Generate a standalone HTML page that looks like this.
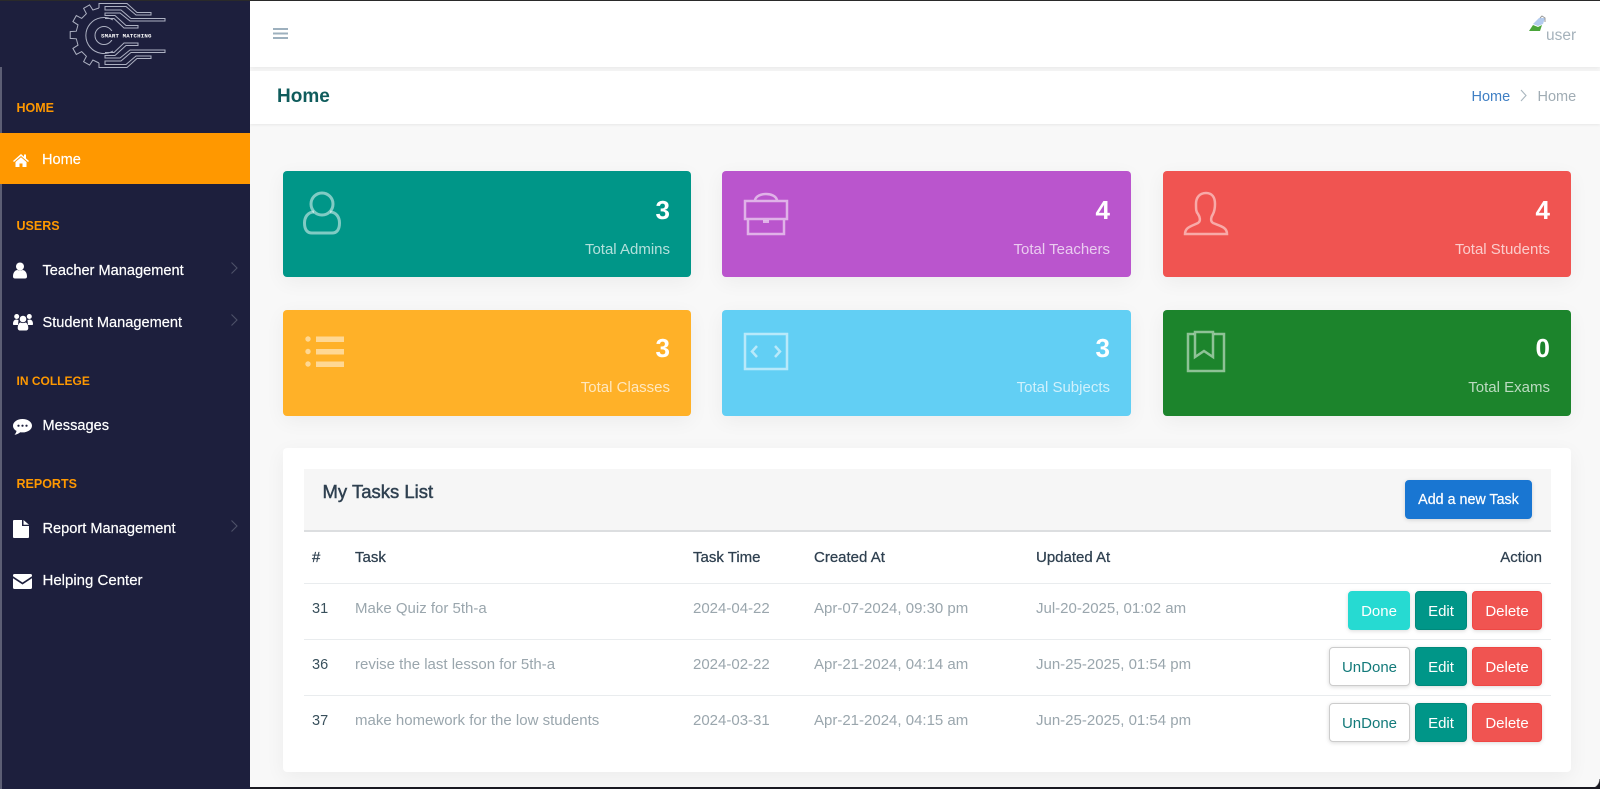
<!DOCTYPE html>
<html><head><meta charset="utf-8"><title>Home</title>
<style>
*{box-sizing:border-box}
html,body{margin:0;padding:0;width:1600px;height:789px;overflow:hidden;background:#f8f8f8;font-family:"Liberation Sans",sans-serif}
.a{position:absolute}
.t{position:absolute;line-height:20px;height:20px;white-space:nowrap}
.r{text-align:right}
.sec{color:#ff9800;font-weight:bold;font-size:12.5px;left:16.5px}
.nav{color:#fff;font-size:14.6px;left:42.5px;-webkit-text-stroke:.2px #fff}
.card{position:absolute;width:408px;height:106px;border-radius:4px;box-shadow:0 5px 20px rgba(0,0,0,.05)}
.mid{width:409px}
.num{position:absolute;right:21px;top:26px;line-height:26px;font-size:26px;font-weight:bold;color:#fff}
.lab{position:absolute;right:21px;top:68.5px;line-height:20px;font-size:15px;color:rgba(255,255,255,.7)}
.r2 .num{top:25px}
.r2 .lab{top:67.5px}
.card svg{position:absolute;left:0;top:0}
.th{color:#2f4050;font-size:15px;-webkit-text-stroke:.25px #2f4050}
.td{color:#9aa6ad;font-size:15px}
.id{color:#39505c;font-size:14.5px}
.btn{position:absolute;height:39px;line-height:39px;border-radius:4px;text-align:center;font-size:15px;color:#fff;box-shadow:0 1px 4px rgba(0,0,0,.15)}
.done{background:#26dad2;border:1px solid #26dad2}
.undo{background:#fff;border:1px solid #ccc;color:#137a7a}
.edit{background:#009688;border:1px solid #00897b}
.del{background:#f05451;border:1px solid #ef4744}
.hl{position:absolute;left:304px;width:1247px;height:1px;background:#e9ecee}
</style></head><body>

<div class="a" style="left:250px;top:0;width:1350px;height:67px;background:#fff;box-shadow:0 1px 5px rgba(0,0,0,.08)"></div>
<div class="a" style="left:250px;top:71px;width:1350px;height:53px;background:#fff;box-shadow:0 1px 3px rgba(0,0,0,.07)"></div>

<svg class="a" style="left:273px;top:27px" width="16" height="13"><path d="M0 2h15M0 6.500h15M0 11h15" stroke="#9db0be" stroke-width="2"/></svg>

<svg class="a" style="left:1529px;top:15px" width="18" height="17"><path d="M0 16L4 10 9 12 13 10 11 16z" fill="#4aa53a"/><path d="M4 9L10 3 16 3 14 9 9 11z" fill="#b3cbee"/><path d="M11 3l2-2 3 2v4" fill="none" stroke="#9a9a9a"/></svg>
<div class="t" style="left:1546px;top:26px;font-size:15.500px;color:#a5b2bb">user</div>

<div class="t" style="left:277px;top:87px;font-size:19px;font-weight:bold;color:#0f5c5c">Home</div>
<div class="t" style="left:1471.500px;top:87px;font-size:14.500px;color:#3f7fc4">Home</div>
<svg class="a" style="left:1519px;top:89px" width="10" height="13"><path d="M2 1l5 5.500-5 5.500" fill="none" stroke="#a9b6bf" stroke-width="1.100"/></svg>
<div class="t" style="left:1537.500px;top:87px;font-size:14.500px;color:#a0acb4">Home</div>

<!-- Sidebar -->
<div class="a" style="left:0;top:0;width:250px;height:789px;background:#1d1f3d"></div>
<div class="a" style="left:0;top:67px;width:2px;height:722px;background:#5c5e74"></div>
<div class="a" style="left:0;top:133px;width:250px;height:51px;background:#ff9800"></div>

<svg class="a" style="left:60px;top:0" width="120" height="72" viewBox="60 0 120 72" fill="none" stroke="#adb1c2" stroke-width="1">
<path d="M99 8L92.900 10 89.600 4.900 83.600 8.300 86.400 13.700 81.700 18.400 76.300 15.600 72.900 21.600 78 24.900 76.300 31.200 70.200 31.600V38.400L76.300 38.800 78 45.100 72.900 48.400 76.300 54.400 81.700 51.600 86.400 56.300 83.600 61.700 89.600 65.100 92.900 60 99 63"/>
<path d="M99 8V3.500H127L137 12.500H151V15H136L126 6.500H105V10H121L131 18.500H165V21H130L120 13H105V15.500H115L126 25.500H138V28H124L114 18.500H105"/>
<g transform="matrix(1 0 0 -1 0 71)"><path d="M99 8V3.500H127L137 12.500H151V15H136L126 6.500H105V10H121L131 18.500H165V21H130L120 13H105V15.500H115L126 25.500H138V28H124L114 18.500H105"/></g>
<path d="M113 20A18 18 0 1 0 113 51"/>
<circle cx="104" cy="35.500" r="9"/>
<rect x="100" y="31" width="50" height="9" fill="#1d1f3d" stroke="none"/>
<text x="101" y="37.500" font-family="Liberation Mono,monospace" font-size="5.700" font-weight="bold" fill="#fff" stroke="none" letter-spacing=".2">SMART MATCHING</text>
</svg>

<div class="t sec" style="top:98px">HOME</div>
<svg class="a" style="left:13px;top:153px" width="16" height="14" viewBox="0 0 16 14" fill="#fff"><path d="M8 1L0 8l1 1 7-6 7 6 1-1-3-2.600V1.500h-2v2.200zM2.500 9v5h4v-3.500h3V14h4V9L8 4.300z"/></svg>
<div class="t nav" style="top:150px;left:42px">Home</div>

<div class="t sec" style="top:215.500px">USERS</div>
<svg class="a" style="left:13px;top:262px" width="14" height="17" viewBox="0 0 14 17" fill="#fff"><circle cx="7" cy="4.500" r="4"/><path d="M0 14.500C0 10 2.500 8 4.500 8c1 .8 4 .8 5 0 2 0 4.500 2 4.500 6.500 0 1.500-1 2-2 2H2c-1 0-2-.5-2-2z"/></svg>
<div class="t nav" style="top:260.500px">Teacher Management</div>
<svg class="a" style="left:230px;top:261px" width="9" height="14"><path d="M1.500 1.500l5.500 5.500-5.500 5.500" fill="none" stroke="#4d5168" stroke-width="1.100"/></svg>

<svg class="a" style="left:13px;top:313px" width="20" height="18" viewBox="0 0 20 18" fill="#fff"><circle cx="10" cy="6" r="3.300"/><circle cx="3.700" cy="3.500" r="2.500"/><circle cx="16.300" cy="3.500" r="2.500"/><path d="M0 11c0-3 1.500-4.500 3.500-4.500l2 .5-.5 5H1c-.7 0-1-.3-1-1zM20 11c0-3-1.500-4.500-3.500-4.500l-2 .5.500 5h4c.7 0 1-.3 1-1zM4.700 15c0-4 2-5.500 3-5.500 1 .8 3.600.8 4.600 0 1 0 3 1.500 3 5.500 0 1.500-1 2.500-2.500 2.500h-5.600c-1.500 0-2.500-1-2.500-2.500z"/></svg>
<div class="t nav" style="top:312.500px">Student Management</div>
<svg class="a" style="left:230px;top:313px" width="9" height="14"><path d="M1.500 1.500l5.500 5.500-5.500 5.500" fill="none" stroke="#4d5168" stroke-width="1.100"/></svg>

<div class="t sec" style="top:371px;font-size:12px">IN COLLEGE</div>
<svg class="a" style="left:13px;top:419px" width="19" height="17" viewBox="0 0 19 17"><path d="M9.500 0C4.200 0 0 3 0 6.700c0 2.200 1.400 4 3.500 5.200-.2 1.500-1 2.800-2 3.800 2.200-.2 4.300-1.200 5.800-2.500.7.100 1.400.2 2.200.2 5.300 0 9.500-3 9.500-6.700S14.800 0 9.500 0z" fill="#fff"/><circle cx="5.500" cy="6.700" r="1.100" fill="#1d1f3d"/><circle cx="9.500" cy="6.700" r="1.100" fill="#1d1f3d"/><circle cx="13.500" cy="6.700" r="1.100" fill="#1d1f3d"/></svg>
<div class="t nav" style="top:415.500px">Messages</div>

<div class="t sec" style="top:474px">REPORTS</div>
<svg class="a" style="left:13px;top:520px" width="16" height="18" viewBox="0 0 16 18" fill="#fff"><path d="M1 0h8v6h7v11a1 1 0 0 1-1 1H1a1 1 0 0 1-1-1V1a1 1 0 0 1 1-1zM10.500 0L16 4.700h-5.500z"/></svg>
<div class="t nav" style="top:518.500px">Report Management</div>
<svg class="a" style="left:230px;top:519px" width="9" height="14"><path d="M1.500 1.500l5.500 5.500-5.500 5.500" fill="none" stroke="#4d5168" stroke-width="1.100"/></svg>

<svg class="a" style="left:13px;top:574px" width="19" height="15" viewBox="0 0 19 15" fill="#fff"><path d="M1.500 0h16A1.500 1.500 0 0 1 19 1.500v.8L9.500 8.500 0 2.300v-.8A1.500 1.500 0 0 1 1.500 0zM0 4.200l9.500 6.300L19 4.200v9.300a1.500 1.500 0 0 1-1.500 1.500h-16A1.500 1.500 0 0 1 0 13.500z"/></svg>
<div class="t nav" style="top:570.500px;font-size:15px">Helping Center</div>

<!-- Cards -->
<div class="card" style="left:283px;top:171px;background:#009688">
<svg width="80" height="80" fill="none" stroke="#fff" stroke-opacity=".5" stroke-width="3"><circle cx="39" cy="33" r="11"/><path d="M31 41C25 41 21.500 46 21.500 52c0 7 3 10 7.500 10h20c4.500 0 7.500-3 7.500-10 0-6-3.500-11-9.500-11"/></svg>
<div class="num">3</div><div class="lab">Total Admins</div></div>

<div class="card mid" style="left:722px;top:171px;background:#ba55cd">
<svg width="80" height="80" fill="none" stroke="#fff" stroke-opacity=".55" stroke-width="2.500"><path d="M23 30H65V48H23zM26 48V63H62V48M33 29C35 21 53 21 55 29"/><path d="M41 50.500H47" stroke-width="3"/></svg>
<div class="num">4</div><div class="lab">Total Teachers</div></div>

<div class="card" style="left:1163px;top:171px;background:#f05451">
<svg width="80" height="80" fill="none" stroke="#fff" stroke-opacity=".5" stroke-width="2.500"><path d="M22 63C22 56 29 55 35 52 38 50 37 46 35 43 33 41 33 38 33 33 33 26 37 22 43 22 49 22 52 26 52 33 52 38 51 41 50 43 48 46 47 50 50 52 57 55 64 56 64 63z"/></svg>
<div class="num">4</div><div class="lab">Total Students</div></div>

<div class="card r2" style="left:283px;top:310px;background:#ffb128">
<svg width="80" height="80" fill="#fff" fill-opacity=".5"><circle cx="25" cy="29" r="2.700"/><circle cx="25" cy="41.500" r="2.700"/><circle cx="25" cy="54" r="2.700"/><path d="M33 26.500H61V32H33zM33 39H61V44.500H33zM33 51.500H61V57H33z"/></svg>
<div class="num">3</div><div class="lab">Total Classes</div></div>

<div class="card mid r2" style="left:722px;top:310px;background:#62cff4">
<svg width="80" height="80" fill="none" stroke="#fff" stroke-opacity=".55" stroke-width="2.500"><path d="M23 24H65V59H23z"/><path d="M35 36L30 41.500 35 47M53 36L58 41.500 53 47" stroke-width="2.500"/></svg>
<div class="num">3</div><div class="lab">Total Subjects</div></div>

<div class="card r2" style="left:1163px;top:310px;background:#1c842c">
<svg width="80" height="80" fill="none" stroke="#fff" stroke-opacity=".5" stroke-width="2.500"><path d="M31 24H25V61H61V24H51"/><path d="M32 22H50V47L41 41 32 47z"/></svg>
<div class="num">0</div><div class="lab">Total Exams</div></div>

<!-- Task panel -->
<div class="a" style="left:283px;top:448px;width:1288px;height:324px;background:#fff;border-radius:4px;box-shadow:0 5px 20px rgba(0,0,0,.05)"></div>
<div class="a" style="left:304px;top:469px;width:1247px;height:63px;background:#f6f6f6;border-bottom:2px solid #dcdee0"></div>
<div class="t" style="left:322.500px;top:482px;font-size:18.500px;color:#2f4050;-webkit-text-stroke:.45px #2f4050">My Tasks List</div>
<div class="btn" style="left:1405px;top:480px;width:127px;background:#1976d2;border:1px solid #1976d2;font-size:14.300px;-webkit-text-stroke:.2px #fff">Add a new Task</div>

<div class="t th" style="left:312px;top:548px">#</div>
<div class="t th" style="left:355px;top:548px">Task</div>
<div class="t th" style="left:693px;top:548px">Task Time</div>
<div class="t th" style="left:814px;top:548px">Created At</div>
<div class="t th" style="left:1036px;top:548px">Updated At</div>
<div class="t th r" style="left:1442px;width:100px;top:548px">Action</div>

<div class="hl" style="top:583px"></div>
<div class="hl" style="top:639px"></div>
<div class="hl" style="top:695px"></div>

<div class="t id" style="left:312px;top:598.500px">31</div>
<div class="t td" style="left:355px;top:598.500px">Make Quiz for 5th-a</div>
<div class="t td" style="left:693px;top:598.500px">2024-04-22</div>
<div class="t td" style="left:814px;top:598.500px">Apr-07-2024, 09:30 pm</div>
<div class="t td" style="left:1036px;top:598.500px">Jul-20-2025, 01:02 am</div>
<div class="btn done" style="left:1348px;top:591px;width:62px">Done</div>
<div class="btn edit" style="left:1415px;top:591px;width:52px">Edit</div>
<div class="btn del" style="left:1472px;top:591px;width:70px">Delete</div>

<div class="t id" style="left:312px;top:654.500px">36</div>
<div class="t td" style="left:355px;top:654.500px">revise the last lesson for 5th-a</div>
<div class="t td" style="left:693px;top:654.500px">2024-02-22</div>
<div class="t td" style="left:814px;top:654.500px">Apr-21-2024, 04:14 am</div>
<div class="t td" style="left:1036px;top:654.500px">Jun-25-2025, 01:54 pm</div>
<div class="btn undo" style="left:1329px;top:647px;width:81px">UnDone</div>
<div class="btn edit" style="left:1415px;top:647px;width:52px">Edit</div>
<div class="btn del" style="left:1472px;top:647px;width:70px">Delete</div>

<div class="t id" style="left:312px;top:710.500px">37</div>
<div class="t td" style="left:355px;top:710.500px">make homework for the low students</div>
<div class="t td" style="left:693px;top:710.500px">2024-03-31</div>
<div class="t td" style="left:814px;top:710.500px">Apr-21-2024, 04:15 am</div>
<div class="t td" style="left:1036px;top:710.500px">Jun-25-2025, 01:54 pm</div>
<div class="btn undo" style="left:1329px;top:703px;width:81px">UnDone</div>
<div class="btn edit" style="left:1415px;top:703px;width:52px">Edit</div>
<div class="btn del" style="left:1472px;top:703px;width:70px">Delete</div>

<div class="a" style="left:0;top:0;width:1600px;height:1px;background:#2a2a2a"></div>
<div class="a" style="left:250px;top:787px;width:1350px;height:2px;background:#1a1a22"></div>
<div class="a" style="left:1590px;top:779px;width:10px;height:10px;background:radial-gradient(circle at 0 0,transparent 9px,#1a1a22 10px)"></div>
</body></html>
